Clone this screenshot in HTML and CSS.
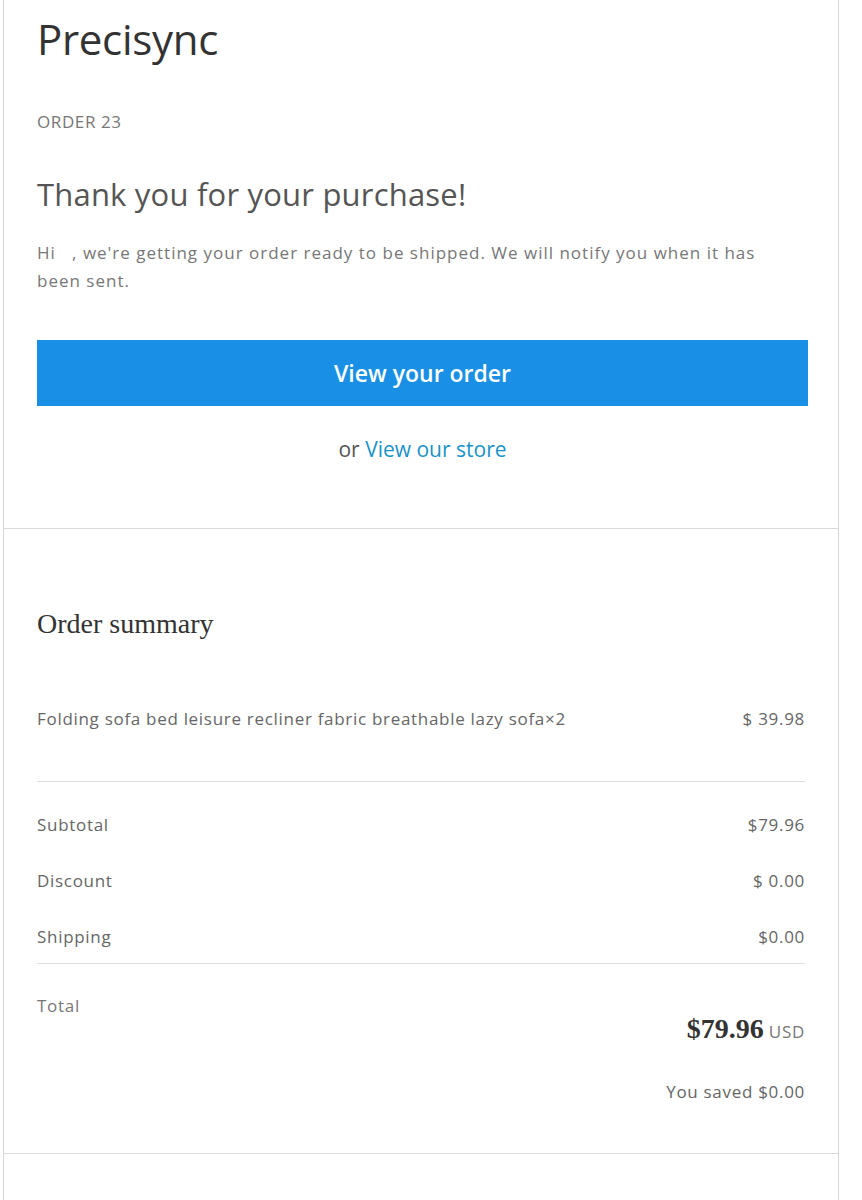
FILE: index.html
```html
<!DOCTYPE html>
<html lang="en">
<head>
<meta charset="utf-8">
<title>Precisync - Order 23</title>
<link rel="stylesheet" href="styles.css">
</head>
<body>
<div class="mail">
  <section class="section header-section">
    <h1 class="brand">Precisync</h1>
    <p class="order-no">ORDER 23</p>
    <h2 class="thanks">Thank you for your purchase!</h2>
    <p class="intro">Hi&nbsp;&nbsp;&nbsp;, we're getting your order ready to be shipped. We will notify you when it has been sent.</p>
    <a class="btn" href="#">View your order</a>
    <p class="alt-link">or <a href="#">View our store</a></p>
  </section>
  <section class="section summary-section">
    <h3 class="summary-title">Order summary</h3>
    <div class="row item-row">
      <span>Folding sofa bed leisure recliner fabric breathable lazy sofa×2</span>
      <span>$ 39.98</span>
    </div>
    <div class="totals">
      <div class="row line"><span>Subtotal</span><span>$79.96</span></div>
      <div class="row line"><span>Discount</span><span>$ 0.00</span></div>
      <div class="row line"><span>Shipping</span><span>$0.00</span></div>
    </div>
    <div class="grand">
      <div class="grand-label">Total</div>
      <div class="grand-amount"><strong>$79.96</strong><span class="cur">USD</span></div>
      <div class="saved">You saved $0.00</div>
    </div>
  </section>
  <section class="section footer-section"></section>
</div>
</body>
</html>
```

FILE: styles.css
```css
html, body {
  margin: 0;
  padding: 0;
  background: #ffffff;
}
body {
  font-family: "Open Sans", "Noto Sans", "Liberation Sans", sans-serif;
  color: #555;
}
.mail {
  margin-left: 3px;
  width: 836px;
  box-sizing: border-box;
  border-left: 1px solid #d6d6d6;
  border-right: 1px solid #d6d6d6;
}
.section {
  padding: 0 30px 0 33px;
  border-bottom: 1px solid #d9d9d9;
}
.header-section {
  padding-top: 12px;
  padding-bottom: 64px;
}
.brand {
  margin: 0;
  font-size: 42px;
  line-height: 54px;
  font-weight: 400;
  color: #333;
  letter-spacing: -0.3px;
}
.order-no {
  margin: 46px 0 0;
  font-size: 17px;
  line-height: 20px;
  color: #777;
  letter-spacing: 0.6px;
}
.thanks {
  margin: 42px 0 0;
  font-size: 31px;
  line-height: 40px;
  font-weight: 400;
  color: #555;
  letter-spacing: 0.2px;
}
.intro {
  margin: 25px 0 0;
  max-width: 730px;
  font-size: 17px;
  line-height: 28px;
  color: #777;
  letter-spacing: 1px;
}
.btn {
  display: block;
  margin-top: 45px;
  height: 66px;
  line-height: 66px;
  background: #1990e5;
  color: #fff;
  text-align: center;
  text-decoration: none;
  font-size: 23px;
  font-weight: 600;
}
.alt-link {
  margin: 28px 0 0;
  text-align: center;
  font-size: 21px;
  line-height: 30px;
  color: #555;
}
.alt-link a {
  color: #1a93c8;
  text-decoration: none;
}
.summary-section {
  padding-top: 79px;
  padding-bottom: 49px;
}
.summary-title {
  margin: 0;
  font-family: "Liberation Serif", "Times New Roman", serif;
  font-size: 28px;
  line-height: 32px;
  font-weight: 400;
  color: #333;
}
.row {
  display: flex;
  justify-content: space-between;
  align-items: center;
  font-size: 17px;
  color: #666;
  letter-spacing: 0.7px;
}
.item-row {
  margin-top: 67px;
  line-height: 24px;
  padding-bottom: 50px;
  border-bottom: 1px solid #ddd;
  margin-right: 3px;
}
.totals {
  margin-right: 3px;
  padding-top: 15px;
  border-bottom: 1px solid #ddd;
}
.line {
  height: 56px;
  line-height: 56px;
}
.line:last-child {
  height: 54px;
  align-items: flex-start;
}
.grand {
  padding-top: 32px;
  margin-right: 3px;
}
.grand-label {
  font-size: 17px;
  line-height: 20px;
  color: #777;
  letter-spacing: 0.7px;
}
.grand-amount {
  text-align: right;
  line-height: 26px;
}
.grand-amount strong {
  font-family: "Liberation Serif", "Times New Roman", serif;
  font-size: 28px;
  color: #333;
}
.cur {
  margin-left: 5px;
  font-size: 17px;
  color: #777;
  letter-spacing: 0.7px;
}
.saved {
  margin-top: 35px;
  text-align: right;
  font-size: 17px;
  line-height: 24px;
  color: #666;
  letter-spacing: 0.7px;
}
.footer-section {
  border-bottom: none;
  height: 60px;
}
```
